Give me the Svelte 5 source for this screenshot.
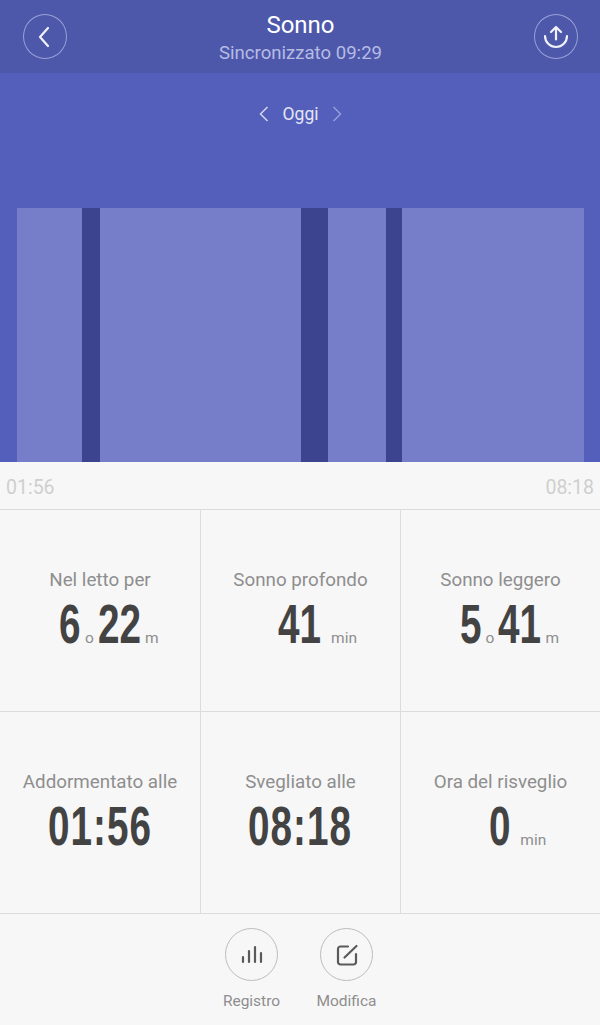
<script>
  const segments = [
    { w: 65, deep: false },
    { w: 18, deep: true },
    { w: 201, deep: false },
    { w: 27, deep: true },
    { w: 58, deep: false },
    { w: 16, deep: true },
    { w: 182, deep: false }
  ];

  const stats = [
    { label: 'Nel letto per', parts: [['6', 'o'], ['22', 'm']] },
    { label: 'Sonno profondo', parts: [['41', 'min']], wide: true },
    { label: 'Sonno leggero', parts: [['5', 'o'], ['41', 'm']] },
    { label: 'Addormentato alle', time: '01:56' },
    { label: 'Svegliato alle', time: '08:18' },
    { label: 'Ora del risveglio', parts: [['0', 'min']], wide: true }
  ];
</script>

<main class="page">
  <header class="topbar">
    <button class="round" aria-label="Indietro">
      <svg width="16" height="22" viewBox="0 0 16 22"><path d="M11 2 L3 11 L11 20" /></svg>
    </button>
    <div class="title">
      <h1>Sonno</h1>
      <p>Sincronizzato 09:29</p>
    </div>
    <button class="round" aria-label="Condividi">
      <svg width="26" height="26" viewBox="0 0 26 26">
        <path d="M13 15.5 V3 M8 8 L13 3 L18 8" />
        <path d="M2 12 A11 11 0 0 0 24 12" />
      </svg>
    </button>
  </header>

  <section class="chart">
    <div class="pager">
      <svg width="10" height="16" viewBox="0 0 10 16"><path d="M8.5 1 L1.5 8 L8.5 15" /></svg>
      <span>Oggi</span>
      <svg class="dim" width="10" height="16" viewBox="0 0 10 16"><path d="M1.5 1 L8.5 8 L1.5 15" /></svg>
    </div>
    <div class="bars">
      {#each segments as s}
        <div class="bar" class:deep={s.deep} style="flex-grow: {s.w}"></div>
      {/each}
    </div>
  </section>

  <div class="range">
    <span>01:56</span>
    <span>08:18</span>
  </div>

  <section class="grid">
    {#each stats as stat}
      <div class="cell">
        <div class="label">{stat.label}</div>
        <div class="value" class:wide={stat.wide} class:split={stat.parts && !stat.wide}>
          {#if stat.time}
            <b class="time">{stat.time}</b>
          {:else}
            {#each stat.parts as [num, unit]}
              <b style="--n: {num.length}">{num}</b><small>{unit}</small>
            {/each}
          {/if}
        </div>
      </div>
    {/each}
  </section>

  <footer class="actions">
    <div class="action">
      <div class="circle">
        <svg width="24" height="20" viewBox="0 0 24 20">
          <path d="M3 17 V12 M9 17 V6 M15 17 V2 M21 17 V8" />
        </svg>
      </div>
      <span>Registro</span>
    </div>
    <div class="action">
      <div class="circle">
        <svg width="24" height="24" viewBox="0 0 24 24">
          <path d="M13 3.5 H5.5 A2.5 2.5 0 0 0 3 6 V19 A2.5 2.5 0 0 0 5.5 21.5 H18.5 A2.5 2.5 0 0 0 21 19 V11" />
          <path d="M9.5 14.5 L21.5 3" />
        </svg>
      </div>
      <span>Modifica</span>
    </div>
  </footer>
</main>

<style>
  :global(body) {
    margin: 0;
    background: #f7f7f7;
  }

  .page {
    width: 600px;
    height: 1025px;
    display: flex;
    flex-direction: column;
    font-family: Roboto, "Liberation Sans", sans-serif;
    overflow: hidden;
  }

  .topbar {
    height: 73px;
    box-sizing: border-box;
    background: #4d58ab;
    display: flex;
    align-items: flex-start;
    justify-content: space-between;
    padding: 14px 22px 0 23px;
    color: #fff;
  }

  .round {
    width: 44px;
    height: 45px;
    padding: 0;
    background: none;
    border: 1px solid #9aa1d6;
    border-radius: 50%;
    display: flex;
    align-items: center;
    justify-content: center;
  }

  .round svg path {
    fill: none;
    stroke: #f0f1fa;
    stroke-width: 2.2;
    stroke-linecap: round;
    stroke-linejoin: round;
  }

  .title {
    text-align: center;
  }

  h1 {
    margin: -3px 0 0;
    font-size: 24px;
    line-height: 28px;
    font-weight: 400;
    color: #fff;
  }

  .title p {
    margin: 3px 0 0;
    font-size: 18.6px;
    line-height: 22px;
    color: #b6bbe4;
  }

  .chart {
    height: 389px;
    box-sizing: border-box;
    background: #535fba;
    padding: 0 16px 0 17px;
    display: flex;
    flex-direction: column;
  }

  .pager {
    height: 135px;
    box-sizing: border-box;
    padding-bottom: 53px;
    display: flex;
    align-items: center;
    justify-content: center;
    gap: 14px;
    color: #e3e5f6;
    font-size: 17.5px;
  }

  .pager svg path {
    fill: none;
    stroke: #d4d7f0;
    stroke-width: 1.5;
  }

  .pager svg.dim path {
    stroke: #959ddb;
  }

  .bars {
    flex: 1;
    display: flex;
  }

  .bar {
    flex-basis: 0;
    background: #767ec9;
  }

  .bar.deep {
    background: #3c438f;
  }

  .range {
    height: 47px;
    box-sizing: border-box;
    padding: 3px 6px 0;
    display: flex;
    align-items: center;
    justify-content: space-between;
    color: #cfcfcf;
    font-size: 19.5px;
  }

  .grid {
    display: grid;
    grid-template-columns: 200px 200px 200px;
    grid-auto-rows: 202px;
    border-top: 1px solid #dcdcdc;
  }

  .cell {
    box-sizing: border-box;
    border-left: 1px solid #dcdcdc;
    border-bottom: 1px solid #dcdcdc;
    padding-top: 59px;
    text-align: center;
  }

  .cell:nth-child(3n + 1) {
    border-left: none;
  }

  .label {
    font-size: 18.8px;
    line-height: 22px;
    color: #8e8e8e;
  }

  .value {
    display: flex;
    align-items: baseline;
    justify-content: center;
    margin-top: 8px;
    height: 50px;
    color: #434343;
  }

  /* no condensed face installed, so the digits are squeezed */
  .value b {
    font-family: "Liberation Sans", sans-serif;
    font-weight: 700;
    font-size: 56px;
    line-height: 50px;
    display: inline-block;
    white-space: nowrap;
    width: calc(var(--n) * 0.385em);
    transform: scaleX(0.69);
    transform-origin: left center;
  }

  .value b.time {
    letter-spacing: 1.5px;
    width: 1.87em;
  }

  .value small {
    font-size: 15.5px;
    color: #8e8e8e;
    margin: 0 4px;
  }

  .value.split {
    padding-left: 22px;
  }

  .value.wide {
    padding-left: 38px;
  }

  .value.wide small {
    margin-left: 10px;
  }

  .actions {
    flex: 1;
    display: flex;
    justify-content: center;
    gap: 42px;
    padding: 14px 2px 0 0;
  }

  .action {
    width: 53px;
    display: flex;
    flex-direction: column;
    align-items: center;
    color: #8e8e8e;
    font-size: 15.5px;
  }

  .action span {
    margin-top: 11px;
    white-space: nowrap;
  }

  .circle {
    width: 53px;
    height: 53px;
    box-sizing: border-box;
    border: 1px solid #bdbdbd;
    border-radius: 50%;
    display: flex;
    align-items: center;
    justify-content: center;
  }

  .circle path {
    fill: none;
    stroke: #5a5a5a;
    stroke-width: 2.2;
    stroke-linecap: round;
  }
</style>
